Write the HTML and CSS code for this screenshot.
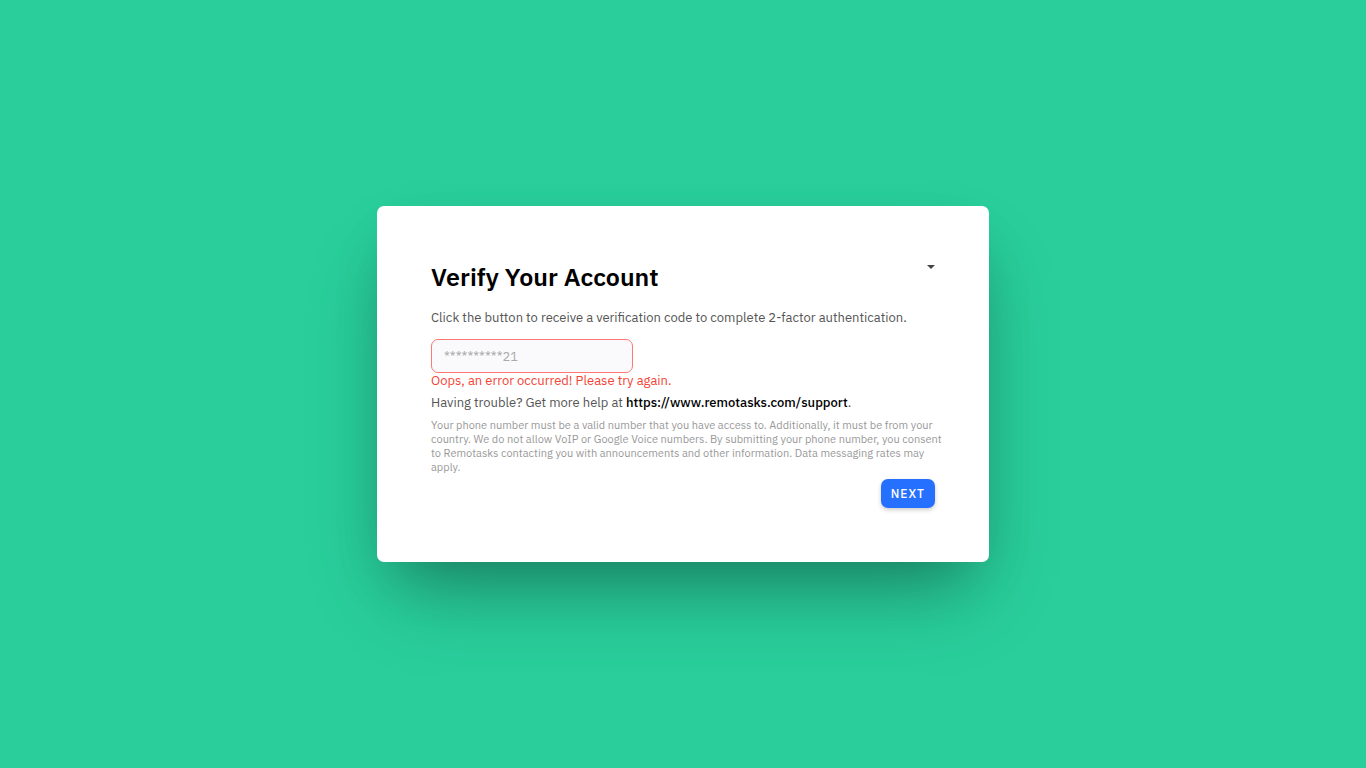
FILE: index.html
```html
<!DOCTYPE html>
<html lang="en">
<head>
<meta charset="utf-8">
<meta name="viewport" content="width=device-width, initial-scale=1">
<title>Verify Your Account</title>
<link rel="stylesheet" href="styles.css">
</head>
<body class="page">
<main class="card">
  <header class="card-header">
    <h1 class="title">Verify Your Account</h1>
    <button class="menu-button" type="button" aria-label="Account menu">
      <svg class="caret" viewBox="0 0 8 4" aria-hidden="true"><path d="M0 0h8L4 4z"/></svg>
    </button>
  </header>
  <form class="form">
    <label class="text" for="phone">Click the button to receive a verification code to complete 2-factor authentication.</label>
    <input class="phone" id="phone" type="text" value="**********21" disabled aria-describedby="phone-error">
    <p class="error" id="phone-error">Oops, an error occurred! Please try again.</p>
    <p class="text help">Having trouble? Get more help at <a class="link" href="https://www.remotasks.com/support">https://www.remotasks.com/support</a>.</p>
    <p class="terms">Your phone number must be a valid number that you have access to. Additionally, it must be from your country. We do not allow VoIP or Google Voice numbers. By submitting your phone number, you consent to Remotasks contacting you with announcements and other information. Data messaging rates may apply.</p>
    <button class="next" type="submit">NEXT</button>
  </form>
</main>
</body>
</html>
```
FILE: styles.css
```css
* {
  box-sizing: border-box;
}

.page {
  margin: 0;
  min-height: 100vh;
  display: flex;
  align-items: center;
  justify-content: center;
  background: #29ce9b;
  font-family: "IBM Plex Sans", "Noto Sans", sans-serif;
  font-size: 13px;
  line-height: 20px;
  color: #555;
}

.card {
  width: 100%;
  max-width: 612px;
  padding: 54px;
  border-radius: 7px;
  background: #fff;
  box-shadow: 0 44px 80px -18px rgba(0, 0, 0, 0.26), 0 26px 54px -16px rgba(0, 0, 0, 0.2);
}

.card-header {
  display: flex;
  justify-content: space-between;
  align-items: flex-start;
  margin-bottom: 14px;
}

.title {
  margin: 0;
  font-size: 25px;
  line-height: 34px;
  font-weight: 600;
  color: #000;
}

.menu-button {
  display: flex;
  padding: 5px 0;
  border: 0;
  background: none;
  color: #444;
  cursor: pointer;
}

.caret {
  width: 8px;
  height: 4px;
  fill: currentColor;
}

.form {
  display: flex;
  flex-direction: column;
}

.text,
.error,
.terms {
  margin: 0;
}

.phone {
  width: 202px;
  max-width: 100%;
  height: 34px;
  margin-top: 11px;
  padding: 0 12px;
  border: 1px solid #ff7875;
  border-radius: 7px;
  background: #fafafc;
  color: #aaa;
  font: inherit;
}

.error {
  line-height: 16px;
  color: #f44336;
}

.help {
  margin-top: 4px;
}

.link {
  color: #000;
  font-weight: 500;
  text-decoration: none;
}

.terms {
  margin: 5px -8px 0 0;
  font-size: 11px;
  line-height: 14px;
  color: #999;
}

.next {
  align-self: flex-end;
  height: 29px;
  margin-top: 5px;
  padding: 0 10px;
  border: 0;
  border-radius: 7px;
  background: #2670ff;
  box-shadow: 0 2px 4px rgba(0, 0, 0, 0.2);
  color: #fff;
  font: inherit;
  font-size: 12px;
  font-weight: 500;
  letter-spacing: 1px;
  cursor: pointer;
}
```
